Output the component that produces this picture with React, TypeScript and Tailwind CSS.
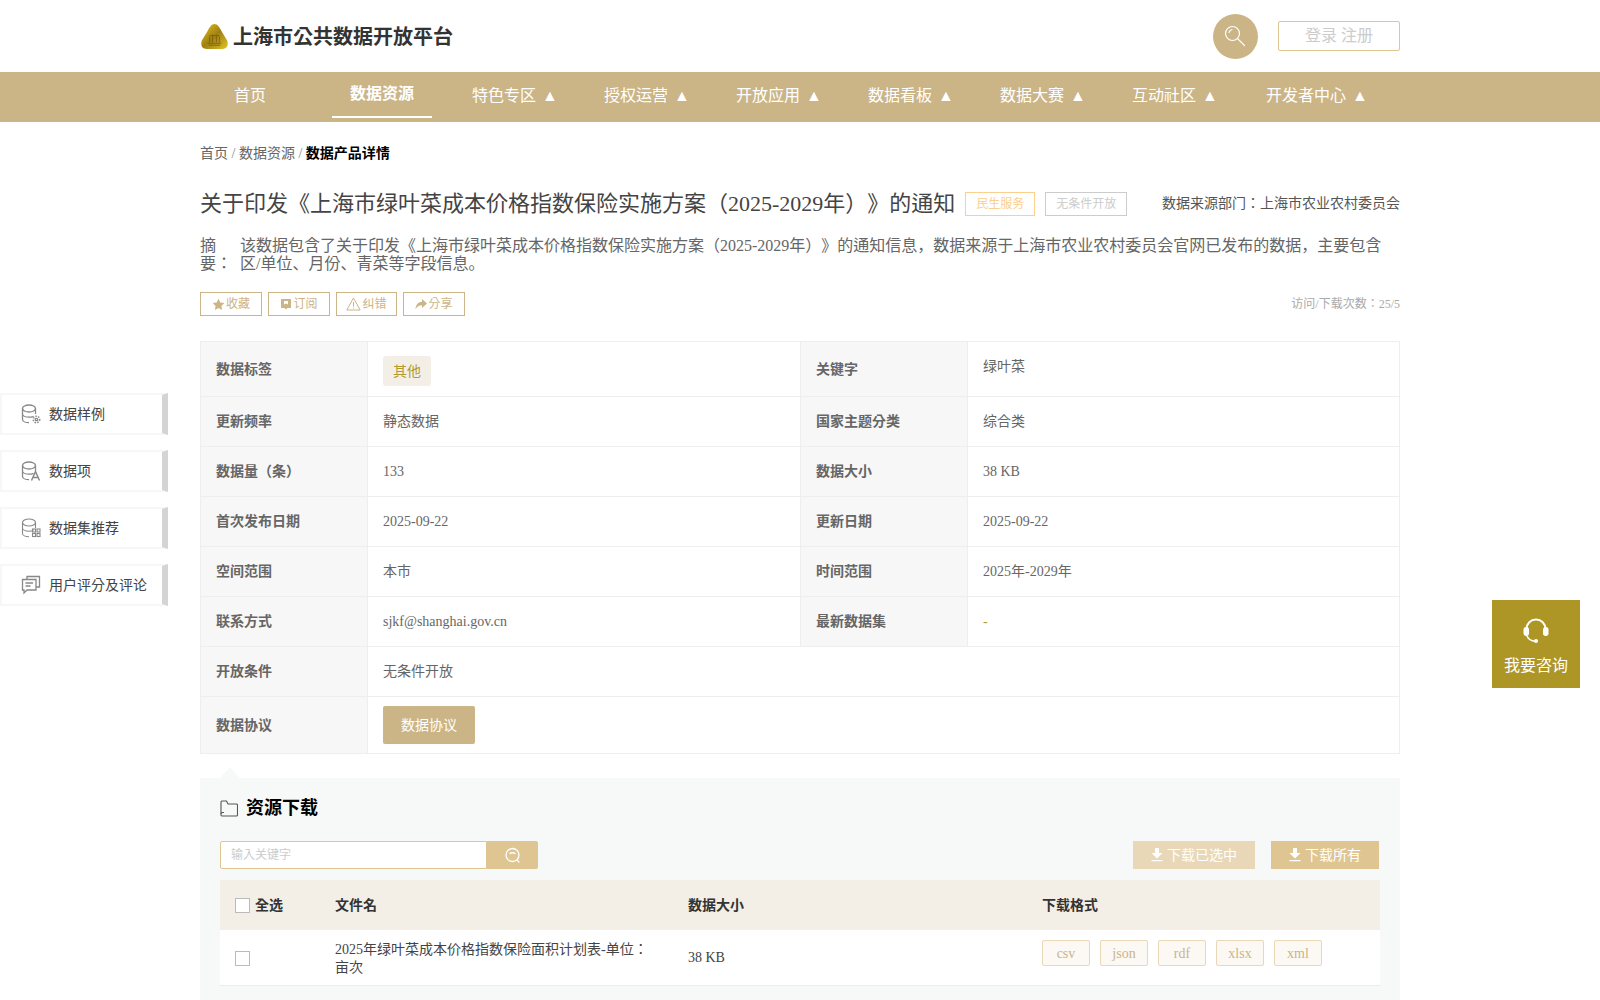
import React from "react";

const navItems = [
  { label: "首页", width: "w-[100px]" },
  { label: "数据资源", width: "w-[100px]", active: true },
  { label: "特色专区", width: "w-[100px]", arrow: true },
  { label: "授权运营", width: "w-[100px]", arrow: true },
  { label: "开放应用", width: "w-[100px]", arrow: true },
  { label: "数据看板", width: "w-[100px]", arrow: true },
  { label: "数据大赛", width: "w-[100px]", arrow: true },
  { label: "互动社区", width: "w-[100px]", arrow: true },
  { label: "开发者中心", width: "w-[120px]", arrow: true },
];

const Logo = () => (
  <svg width="29" height="27" viewBox="0 0 30 28">
    <defs>
      <linearGradient id="gold" x1="0" y1="0" x2="1" y2="1">
        <stop offset="0" stopColor="#e3c522" />
        <stop offset="0.5" stopColor="#a08010" />
        <stop offset="1" stopColor="#e0c52c" />
      </linearGradient>
    </defs>
    <path d="M15 1c3 0 5 3 7 7l6 10c2 5 0 9-5 9H7c-5 0-7-4-5-9l6-10c2-4 4-7 7-7z" fill="url(#gold)" />
    <path d="M8 21h14M9 23h12M10 14v6M13 12v8M17 12v8M20 14v6M10 13h10" stroke="#7d6410" strokeWidth="1" fill="none" />
  </svg>
);

const SearchIcon = () => (
  <svg width="22" height="22" viewBox="0 0 22 22" fill="none" stroke="#fff" strokeWidth="1.200" strokeLinecap="round" className="-translate-x-[1px]">
    <circle cx="8.500" cy="8.500" r="7" />
    <path d="M5 7.500a4 4 0 0 1 3-3M13.500 13.500l7 7" />
  </svg>
);

const ToolSearch = () => (
  <svg width="16" height="16" viewBox="0 0 16 16" fill="none" stroke="#fff" strokeWidth="1.300" strokeLinecap="round">
    <circle cx="7.500" cy="8" r="6.500" />
    <path d="M5 6.500c.8-1 4-1 5 0M12 13l2 2" />
  </svg>
);

const Star = () => (
  <svg width="13" height="13" viewBox="0 0 24 24" fill="#cbb486">
    <path d="M12 1.500l3.300 6.900 7.500 1-5.500 5.200 1.400 7.500-6.700-3.700-6.700 3.700 1.400-7.500L1.200 9.400l7.500-1z" />
  </svg>
);

const Subscribe = () => (
  <svg width="12" height="12" viewBox="0 0 12 12">
    <path d="M1 1h10v9H7.500L6 11.500 4.500 10H1z" fill="#cbb486" />
    <path d="M4 3h4v3.500L6 5.500 4 6.500z" fill="#fff" />
  </svg>
);

const Warn = () => (
  <svg width="15" height="14" viewBox="0 0 15 14" fill="none" stroke="#cbb486" strokeWidth="1">
    <path d="M7.500 1L14.200 13H.8z" strokeLinejoin="round" />
    <path d="M7.500 5v4.500M7.500 10.500v1" />
  </svg>
);

const Share = () => (
  <svg width="12" height="11" viewBox="0 0 12 11" fill="#cbb486">
    <path d="M7 0l5 4.500L7 9V6.200C4 6.200 2 7.200.5 10.500.8 6 3 3 7 2.800z" />
  </svg>
);

const DbBody = () => (
  <>
    <ellipse cx="8" cy="4.500" rx="6.500" ry="3.500" />
    <path d="M1.500 4.500v11c0 1.800 3 3.200 6.500 3.200M1.500 10c0 1.800 3 3.200 6.500 3.200 1.800 0 3.200-.3 4.500-.9M14.500 4.500V10" />
  </>
);

const DbGear = () => (
  <svg width="20" height="20" viewBox="0 0 20 20" fill="none" stroke="#888888" strokeWidth="1.300">
    <DbBody />
    <circle cx="15.500" cy="15.500" r="1.200" />
    <circle cx="15.500" cy="15.500" r="3.200" strokeDasharray="1.500 1.200" strokeWidth="1.500" />
  </svg>
);

const DbLetter = () => (
  <svg width="20" height="20" viewBox="0 0 20 20" fill="none" stroke="#888888" strokeWidth="1.300">
    <DbBody />
    <path d="M10.500 19.500l4-9 4 9M12 16.500h5" strokeWidth="1.500" />
  </svg>
);

const DbGrid = () => (
  <svg width="20" height="20" viewBox="0 0 20 20" fill="none" stroke="#888888" strokeWidth="1.100">
    <DbBody />
    <rect x="11.500" y="11" width="3" height="3" />
    <rect x="16" y="11" width="3" height="3" />
    <rect x="11.500" y="15.500" width="3" height="3" />
    <rect x="16" y="15.500" width="3" height="3" />
  </svg>
);

const Comment = () => (
  <svg width="20" height="20" viewBox="0 0 20 20" fill="none" stroke="#888888" strokeWidth="1.300">
    <path d="M6 4V1.500h12.500V12H15" />
    <path d="M1.500 4.500H15v10.500H6L3 18v-3H1.500z" />
    <path d="M4.500 8h7.500M4.500 11h5" />
  </svg>
);

const Folder = () => (
  <svg width="18" height="17" viewBox="0 0 18 17" fill="none" stroke="#555" strokeWidth="1.100">
    <path d="M1 15V2a1 1 0 0 1 1-1h4.500l1.500 3h8.500a1 1 0 0 1 1 1v10a1 1 0 0 1-1 1H2a1 1 0 0 1-1-1z" />
    <path d="M1 14c0-1 .5-1.500 1.500-1.500H4" />
  </svg>
);

const Download = () => (
  <svg width="12" height="14" viewBox="0 0 12 14" fill="#fff">
    <path d="M4 0h4v5h3.500L6 10.500.5 5H4zM.5 12h11v1.300H.5z" />
  </svg>
);

const Headset = () => (
  <svg width="28" height="28" viewBox="0 0 28 28" fill="none">
    <path d="M4.500 13a9.500 9.500 0 0 1 19 0" stroke="#fff" strokeWidth="2" />
    <path d="M5 20c1.500 3.200 4.500 5 8 5.200" stroke="#fff" strokeWidth="1.600" />
    <rect x="1.500" y="11" width="5.500" height="9" rx="2.700" fill="#fff" />
    <rect x="21" y="11" width="5.500" height="9" rx="2.700" fill="#fff" />
    <circle cx="14" cy="25" r="2" fill="#fff" />
  </svg>
);

const sideItems = [
  { label: "数据样例", icon: <DbGear /> },
  { label: "数据项", icon: <DbLetter /> },
  { label: "数据集推荐", icon: <DbGrid /> },
  { label: "用户评分及评论", icon: <Comment /> },
];

const actions = [
  { label: "收藏", icon: <Star />, width: "w-[62px]" },
  { label: "订阅", icon: <Subscribe />, width: "w-[62px]" },
  { label: "纠错", icon: <Warn />, width: "w-[61px]" },
  { label: "分享", icon: <Share />, width: "w-[62px]" },
];

const detailRows = [
  ["更新频率", "静态数据", "国家主题分类", "综合类"],
  ["数据量（条）", "133", "数据大小", "38 KB"],
  ["首次发布日期", "2025-09-22", "更新日期", "2025-09-22"],
  ["空间范围", "本市", "时间范围", "2025年-2029年"],
];

const labelCell = "border border-[#eeeeee] bg-[#f7f7f7] pl-[15px] text-left align-middle font-bold text-[#666666]";
const valueCell = "border border-[#eeeeee] pl-[15px] align-middle text-[#666666]";

const formats = ["csv", "json", "rdf", "xlsx", "xml"];

export default function App() {
  return (
    <div className="relative h-screen overflow-hidden bg-white text-[14px] text-[#666666] [font-family:'Liberation_Serif','Noto_Sans_CJK_KR',serif] [text-spacing-trim:space-all]">
      <header className="mx-auto flex h-[72px] w-[1200px] items-center justify-between">
        <div className="flex items-center gap-[4px]">
          <Logo />
          <span className="mt-[2px] text-[20px] font-bold text-[#333333]">上海市公共数据开放平台</span>
        </div>
        <div className="flex items-center gap-[20px]">
          <div className="flex h-[45px] w-[45px] items-center justify-center rounded-full bg-[#cbb486]">
            <SearchIcon />
          </div>
          <div className="flex h-[30px] w-[122px] items-center justify-center rounded-[2px] border border-[#dfc592] text-[16px] text-[#cccccc]">
            登录 注册
          </div>
        </div>
      </header>

      <nav className="h-[50px] bg-[#cbb486]">
        <div className="mx-auto flex w-[1200px] gap-[32px]">
          {navItems.map(item => (
            <div
              key={item.label}
              className={`flex h-[46px] shrink-0 items-center justify-center whitespace-nowrap text-[16px] text-white ${item.width} ${
                item.active ? "border-b-2 border-white font-bold" : "mt-[1px]"
              } ${item.arrow ? "pl-[2px]" : ""}`}
            >
              {item.label}
              {item.arrow && <span className="ml-[6px]">▲</span>}
            </div>
          ))}
        </div>
      </nav>

      <main className="mx-auto w-[1200px]">
        <div className="pt-[22px] leading-[20px]">
          首页 <span className="text-[#888888]">/</span> 数据资源 <span className="text-[#888888]">/</span>{" "}
          <span className="font-bold text-black">数据产品详情</span>
        </div>

        <div className="mt-[25px] flex h-[30px] items-center">
          <h1 className="pb-[2px] text-[22px] font-normal text-[#444444]">
            关于印发《上海市绿叶菜成本价格指数保险实施方案（2025-2029年）》的通知
          </h1>
          <span className="ml-[10px] flex h-[24px] w-[70px] items-center justify-center border border-[#fbcf8e] text-[12px] text-[#fbcf8e]">
            民生服务
          </span>
          <span className="ml-[10px] flex h-[24px] w-[82px] items-center justify-center border border-[#cccccc] text-[12px] text-[#cccccc]">
            无条件开放
          </span>
          <span className="ml-auto pb-[2px] text-[#555555]">数据来源部门：上海市农业农村委员会</span>
        </div>

        <div className="mt-[18px] flex text-[16px] leading-[18px]">
          <div className="w-[40px] shrink-0">
            摘
            <br />
            要：
          </div>
          <p className="w-[1145px]">
            该数据包含了关于印发《上海市绿叶菜成本价格指数保险实施方案（2025-2029年）》的通知信息，数据来源于上海市农业农村委员会官网已发布的数据，主要包含区/单位、月份、青菜等字段信息。
          </p>
        </div>

        <div className="mt-[19px] flex h-[24px] items-center">
          <div className="flex gap-[6px]">
            {actions.map(action => (
              <div
                key={action.label}
                className={`flex h-[24px] items-center justify-center gap-[1px] border border-[#cbb486] text-[12px] text-[#cbb486] ${action.width}`}
              >
                {action.icon}
                {action.label}
              </div>
            ))}
          </div>
          <span className="ml-auto text-[12px] text-[#aaaaaa]">访问/下载次数：25/5</span>
        </div>

        <table className="mt-[25px] w-[1199px] table-fixed border-collapse">
          <colgroup>
            <col className="w-[167px]" />
            <col className="w-[433px]" />
            <col className="w-[167px]" />
            <col className="w-[432px]" />
          </colgroup>
          <tbody>
            <tr className="h-[55px]">
              <th className={labelCell}>数据标签</th>
              <td className={valueCell}>
                <span className="mt-[4px] flex h-[30px] w-[48px] items-center justify-center rounded-[3px] bg-[#f3efe7] text-[#b39a2c]">
                  其他
                </span>
              </td>
              <th className={labelCell}>关键字</th>
              <td className={`${valueCell} pb-[6px]`}>绿叶菜</td>
            </tr>
            {detailRows.map(row => (
              <tr key={row[0]} className="h-[50px]">
                <th className={labelCell}>{row[0]}</th>
                <td className={valueCell}>{row[1]}</td>
                <th className={labelCell}>{row[2]}</th>
                <td className={valueCell}>{row[3]}</td>
              </tr>
            ))}
            <tr className="h-[50px]">
              <th className={labelCell}>联系方式</th>
              <td className={valueCell}>sjkf@shanghai.gov.cn</td>
              <th className={labelCell}>最新数据集</th>
              <td className={`${valueCell} text-[#b39a2c]`}>-</td>
            </tr>
            <tr className="h-[50px]">
              <th className={labelCell}>开放条件</th>
              <td className={valueCell} colSpan={3}>
                无条件开放
              </td>
            </tr>
            <tr className="h-[57px]">
              <th className={labelCell}>数据协议</th>
              <td className={valueCell} colSpan={3}>
                <span className="flex h-[38px] w-[92px] items-center justify-center rounded-[2px] bg-[#cbb486] text-white">
                  数据协议
                </span>
              </td>
            </tr>
          </tbody>
        </table>

        <section className="relative mt-[24px] h-[300px] bg-[#f7f9f8] px-[20px]">
          <div className="absolute left-[20px] top-[-11px] h-0 w-0 border-x-[10px] border-b-[11px] border-x-transparent border-b-[#f7f9f8]" />

          <div className="flex items-center gap-[8px] pt-[19px]">
            <Folder />
            <h2 className="text-[18px] font-bold leading-[22px] text-black">资源下载</h2>
          </div>

          <div className="mt-[22px] flex justify-between pr-[1px]">
            <div className="flex h-[28px] w-[318px]">
              <div className="flex flex-1 items-center rounded-l-[2px] border border-[#dfc592] bg-white pl-[10px] text-[12px] text-[#cccccc]">
                输入关键字
              </div>
              <div className="flex w-[51px] items-center justify-center rounded-r-[2px] bg-[#dfc592]">
                <ToolSearch />
              </div>
            </div>
            <div className="flex gap-[16px]">
              <div className="flex h-[28px] w-[122px] items-center justify-center gap-[4px] bg-[#e8d8b8] text-white">
                <Download />
                下载已选中
              </div>
              <div className="flex h-[28px] w-[108px] items-center justify-center gap-[4px] bg-[#dfc592] text-white">
                <Download />
                下载所有
              </div>
            </div>
          </div>

          <div className="mt-[11px] flex h-[50px] items-center bg-[#f3efe7] font-bold text-[#333333]">
            <div className="flex w-[115px] items-center gap-[5px] pl-[15px]">
              <span className="h-[15px] w-[15px] border border-[#bbbbbb] bg-white" />
              全选
            </div>
            <div className="w-[353px]">文件名</div>
            <div className="w-[354px]">数据大小</div>
            <div>下载格式</div>
          </div>
          <div className="flex h-[56px] items-center border-b border-[#f0ece4] bg-white text-[#444444]">
            <div className="w-[115px] pl-[15px]">
              <span className="mt-[2px] block h-[15px] w-[15px] border border-[#bbbbbb]" />
            </div>
            <div className="w-[353px] pr-[32px] pt-[2px] leading-[18px]">2025年绿叶菜成本价格指数保险面积计划表-单位：亩次</div>
            <div className="w-[354px]">38 KB</div>
            <div className="flex gap-[10px] self-start pt-[10px]">
              {formats.map(format => (
                <span
                  key={format}
                  className="flex h-[26px] w-[48px] items-center justify-center rounded-[2px] border border-[#e8d8b8] bg-[#fcf9f4] text-[#cbb486]"
                >
                  {format}
                </span>
              ))}
            </div>
          </div>
        </section>
      </main>

      <aside className="absolute left-0 top-[393px] flex w-[168px] flex-col gap-[15px]">
        {sideItems.map(item => (
          <div
            key={item.label}
            className="flex h-[42px] items-center gap-[8px] border-2 border-r-[6px] border-[#f7f7f7] border-r-[#d4d4d4] bg-white pl-[19px] text-[#444444]"
          >
            {item.icon}
            {item.label}
          </div>
        ))}
      </aside>

      <div className="absolute left-[1492px] top-[600px] flex h-[88px] w-[88px] flex-col items-center bg-[#ae9626] pt-[16px] text-[16px] text-white">
        <Headset />
        <span className="mt-[12px] leading-[20px]">我要咨询</span>
      </div>
    </div>
  );
}
